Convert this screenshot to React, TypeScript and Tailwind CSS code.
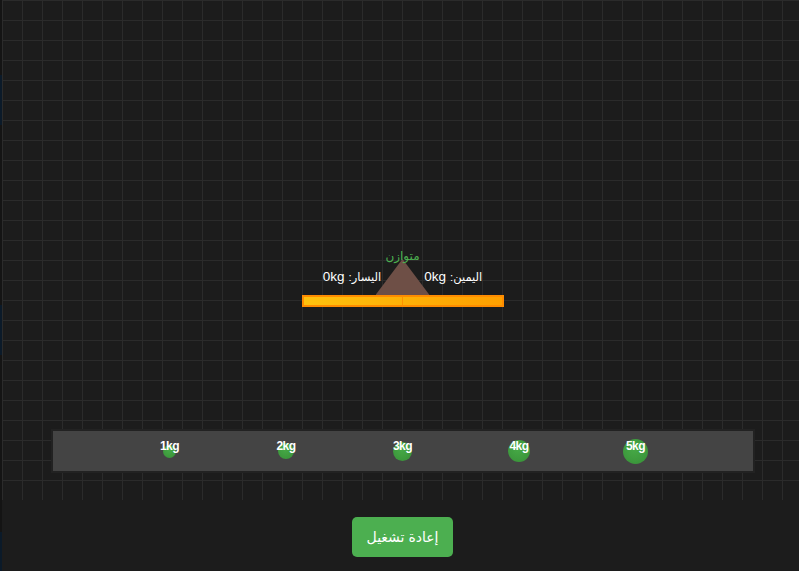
const weights = [1, 2, 3, 4, 5];

function LeftStrip() {
  // sliver of an off-screen panel along the left edge
  return (
    <div className="flex w-[2px] shrink-0 flex-col bg-[#141414]">
      <div className="h-[75px]" />
      <div className="h-[50px] bg-[#0b1a29]" />
      <div className="h-[180px]" />
      <div className="h-[50px] bg-[#0b1a29]" />
      <div className="h-[177px]" />
      <div className="flex-1 bg-[#0b1a29]" />
    </div>
  );
}

function SideLabel({ side }: { side: string }) {
  return (
    <span dir="rtl" className="flex items-baseline gap-[4px]">
      <span className="text-[11.5px]">{side}:</span>
      <span className="text-[13.5px]">0kg</span>
    </span>
  );
}

function Balance() {
  return (
    <div className="relative mt-[249px] flex w-[202px] flex-col items-center">
      <div
        className="absolute left-1/2 top-[10px] h-[36px] w-[54px] -translate-x-1/2 bg-[#6e4f46]"
        style={{ clipPath: "polygon(50% 0, 100% 100%, 0 100%)" }}
      />
      <p className="relative h-[14px] text-[12px] leading-[14px] text-[#4caf50]" dir="rtl">
        متوازن
      </p>
      <div className="relative mt-[6px] flex h-[16px] w-full justify-center gap-[43px] leading-[16px] text-white">
        <SideLabel side="اليسار" />
        <SideLabel side="اليمين" />
      </div>
      <div className="relative mt-[10px] flex h-[12px] w-full border-2 border-[#ff8c00] bg-[linear-gradient(to_right,#ffc20e,#ffa000)]">
        <div className="flex-1" />
        <div className="w-px bg-[#ff9100]" />
        <div className="flex-1" />
      </div>
    </div>
  );
}

function Tray() {
  return (
    <div className="mb-[27px] mt-auto flex h-[44px] w-[704px] items-stretch justify-center border-2 border-[#222] bg-[#444]">
      {weights.map((w) => {
        const size = 10 + w * 3;
        return (
          <div key={w} className="relative flex w-[116.5px] items-center justify-center">
            <div
              className="rounded-full bg-[radial-gradient(circle_at_45%_40%,#46a946,#378f37)]"
              style={{ width: size, height: size }}
            />
            <span className="absolute left-1/2 top-[8px] -translate-x-1/2 text-[12px] font-bold leading-[14px] tracking-[-0.5px] text-white">
              {w}kg
            </span>
          </div>
        );
      })}
    </div>
  );
}

export default function App() {
  return (
    <div
      className="flex h-[571px] overflow-hidden bg-[#1c1c1c]"
      style={{ fontFamily: '"Liberation Sans", "DejaVu Sans", sans-serif' }}
    >
      <LeftStrip />
      <div className="flex min-w-0 flex-1 flex-col">
        <div className="flex h-[500px] flex-col items-center bg-[linear-gradient(to_right,#2b2b2b_1px,transparent_1px),linear-gradient(to_bottom,#2b2b2b_1px,transparent_1px)] bg-[length:20px_20px] pl-[4px]">
          <Balance />
          <Tray />
        </div>
        <div className="flex flex-1 justify-center pl-[4px] pt-[17px]">
          <button
            type="button"
            className="h-[40px] rounded-[5px] bg-[#4caf50] px-[15px] text-[14px] text-white"
            dir="rtl"
          >
            إعادة تشغيل
          </button>
        </div>
      </div>
    </div>
  );
}
